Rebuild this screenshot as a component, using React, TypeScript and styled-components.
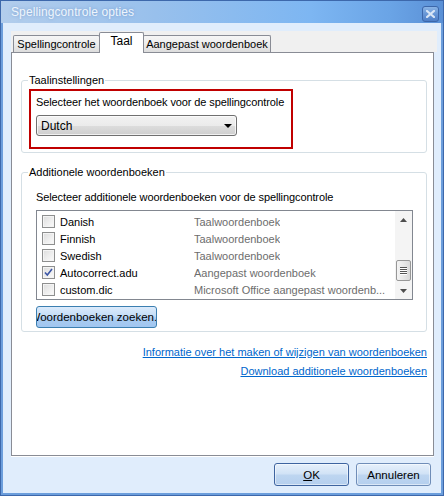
import React from 'react';
import styled, { createGlobalStyle } from 'styled-components';

const GlobalStyle = createGlobalStyle`
  html, body {
    margin: 0;
    padding: 0;
    background: #ffffff;
  }
  body {
    font-family: "Liberation Sans", Arial, sans-serif;
    font-size: 11px;
    color: #000000;
  }
  * {
    box-sizing: border-box;
  }
`;

const Window = styled.div`
  width: 444px;
  height: 496px;
  display: flex;
  flex-direction: column;
  border: 1px solid #3d68ab;
  box-shadow: inset 0 0 0 2px #6c9edc;
  background: #e0edfc;
  overflow: hidden;
`;

const TitleBar = styled.div`
  height: 22px;
  display: flex;
  align-items: center;
  justify-content: space-between;
  padding: 0 4px 0 10px;
  background: linear-gradient(to right, #b2cdec 0%, #98c0ec 35%, #7db6f2 70%, #6aa4e6 88%, #5a90d6 100%);
`;

const Title = styled.span`
  font-size: 12px;
  color: #eef5fc;
  text-shadow: 0 0 3px rgba(90, 130, 190, 0.6);
  letter-spacing: 0.1px;
`;

const CloseButton = styled.div`
  width: 17px;
  height: 16px;
  margin-top: 4px;
  border: 1px solid #3c67aa;
  border-radius: 3px;
  background: linear-gradient(to bottom, #8ab4e6 0%, #6796d6 50%, #4f7fc7 100%);
  display: flex;
  align-items: center;
  justify-content: center;
`;

const Body = styled.div`
  flex: 1;
  display: flex;
  flex-direction: column;
  padding: 8px 6px 0 10px;
`;

const TabControl = styled.div`
  display: flex;
  flex-direction: column;
`;

const TabHeader = styled.div`
  height: 21px;
  display: flex;
  align-items: flex-end;
  padding-left: 2px;
  background: #f0f0f0;
  position: relative;
  z-index: 1;
`;

const Tab = styled.div<{ $active?: boolean; $w: number }>`
  width: ${({ $w }) => $w}px;
  height: ${({ $active }) => ($active ? 21 : 17)}px;
  margin-bottom: ${({ $active }) => ($active ? -1 : 0)}px;
  margin-left: -1px;
  &:first-child {
    margin-left: 0;
  }
  border: 1px solid #898c95;
  border-bottom: none;
  border-radius: 2px 2px 0 0;
  display: flex;
  align-items: center;
  justify-content: center;
  padding-bottom: ${({ $active }) => ($active ? 4 : 0)}px;
  font-size: ${({ $active }) => ($active ? 12 : 11)}px;
  background: ${({ $active }) =>
    $active ? '#ffffff' : 'linear-gradient(to bottom, #f6f6f6 0%, #ececec 50%, #dddddd 100%)'};
  position: relative;
  z-index: ${({ $active }) => ($active ? 2 : 1)};
`;

const Panel = styled.div`
  height: 404px;
  margin-right: 3px;
  border: 1px solid #898c95;
  background: #ffffff;
  box-shadow: 0 1px 0 #ffffff;
  display: flex;
  flex-direction: column;
  padding: 20px 6px 0 9px;
`;

const Group = styled.fieldset<{ $gap?: number }>`
  margin: ${({ $gap }) => $gap ?? 0}px 0 0 0;
  padding: 2px 0 3px 7px;
  border: 1px solid #d5dfe5;
  border-radius: 3px;
  min-width: 0;
`;

const GroupLegend = styled.legend`
  padding: 0 1px;
  margin-left: -1px;
  line-height: 14px;
  font-size: 11px;
`;

const Highlight = styled.div`
  width: 264px;
  height: 60px;
  border: 2px solid #c00000;
  padding: 5px 0 0 5px;
  display: flex;
  flex-direction: column;
  gap: 6px;
`;

const Label = styled.div<{ $top?: number }>`
  line-height: 13px;
  margin-top: ${({ $top }) => $top ?? 0}px;
  letter-spacing: -0.1px;
`;

const Select = styled.div`
  width: 201px;
  height: 21px;
  border: 1px solid #707070;
  border-radius: 3px;
  background: linear-gradient(to bottom, #f2f2f2 0%, #ebebeb 50%, #dddddd 51%, #cfcfcf 100%);
  box-shadow: inset 0 0 0 1px rgba(255, 255, 255, 0.7);
  display: flex;
  align-items: center;
  justify-content: space-between;
  padding: 0 4px 0 4px;
  font-size: 12px;
`;

const GroupInner = styled.div`
  padding-left: 7px;
  display: flex;
  flex-direction: column;
`;

const ListBox = styled.div`
  width: 377px;
  height: 90px;
  margin-top: 6px;
  border: 1px solid #828790;
  display: flex;
  background: #ffffff;
`;

const ListRows = styled.div`
  flex: 1;
  display: flex;
  flex-direction: column;
  padding: 2px 0 0 5px;
  overflow: hidden;
`;

const ListRow = styled.div`
  height: 17px;
  display: flex;
  align-items: center;
  font-size: 11px;
`;

const NameCell = styled.span`
  width: 139px;
  flex-shrink: 0;
  padding-left: 5px;
  white-space: nowrap;
`;

const TypeCell = styled.span`
  color: #6d6d6d;
  white-space: nowrap;
  overflow: hidden;
`;

const Box = styled.div`
  width: 13px;
  height: 13px;
  border: 1px solid #8e8f8f;
  background: linear-gradient(135deg, #dcdcdc 0%, #eeeeee 55%, #fbfbfb 100%);
  box-shadow: inset 0 0 0 1px #f4f4f4;
  display: flex;
  align-items: center;
  justify-content: center;
  flex-shrink: 0;
`;

const ScrollBar = styled.div`
  width: 17px;
  flex-shrink: 0;
  background: #f4f4f4;
  display: flex;
  flex-direction: column;
`;

const ScrollArrow = styled.div`
  height: 17px;
  display: flex;
  align-items: center;
  justify-content: center;
`;

const ScrollTrack = styled.div`
  flex: 1;
  display: flex;
  flex-direction: column;
  justify-content: flex-end;
  align-items: center;
  padding-bottom: 1px;
`;

const Thumb = styled.div`
  width: 15px;
  height: 21px;
  border: 1px solid #979797;
  border-radius: 2px;
  background: linear-gradient(to right, #f4f4f4 0%, #e8e8e8 50%, #d9d9d9 100%);
  display: flex;
  flex-direction: column;
  align-items: center;
  justify-content: center;
  gap: 1px;
`;

const Grip = styled.div`
  width: 7px;
  height: 1px;
  background: #555555;
  box-shadow: 0 1px 0 #ffffff;
`;

const FindButton = styled.div`
  width: 121px;
  height: 22px;
  margin-top: 6px;
  border: 1px solid #3c7fb1;
  border-radius: 3px;
  background: linear-gradient(to bottom, #dcebfb 0%, #c4ddf7 45%, #a9ccf1 55%, #a1c6f0 100%);
  display: flex;
  align-items: center;
  justify-content: center;
  overflow: hidden;
  white-space: nowrap;
  font-size: 11.5px;
`;

const ButtonText = styled.span`
  flex-shrink: 0;
`;

const Links = styled.div`
  margin-top: 14px;
  display: flex;
  flex-direction: column;
  align-items: flex-end;
  gap: 6px;
`;

const Link = styled.a`
  line-height: 13px;
  font-size: 11px;
  color: #0066cc;
  text-decoration: underline;
  cursor: pointer;
`;

const ButtonRow = styled.div`
  display: flex;
  justify-content: flex-end;
  gap: 7px;
  margin-top: 7px;
  padding-right: 6px;
`;

const DialogButton = styled.div<{ $default?: boolean }>`
  width: 75px;
  height: 23px;
  border: 1px solid ${({ $default }) => ($default ? '#3e64a0' : '#6f8db8')};
  border-radius: 3px;
  background: linear-gradient(to bottom, #e6f0fb 0%, #d2e3f6 45%, #bdd5f0 55%, #b5cfee 100%);
  box-shadow: inset 0 0 0 1px rgba(255, 255, 255, 0.5);
  display: flex;
  align-items: center;
  justify-content: center;
  font-size: 11.5px;
`;

const Underlined = styled.span`
  text-decoration: underline;
`;

const dictionaries = [
  { name: 'Danish', type: 'Taalwoordenboek', checked: false },
  { name: 'Finnish', type: 'Taalwoordenboek', checked: false },
  { name: 'Swedish', type: 'Taalwoordenboek', checked: false },
  { name: 'Autocorrect.adu', type: 'Aangepast woordenboek', checked: true },
  { name: 'custom.dic', type: 'Microsoft Office aangepast woordenb...', checked: false },
];

function Checkbox({ checked }: { checked: boolean }) {
  return (
    <Box>
      {checked && (
        <svg width="9" height="9" viewBox="0 0 9 9">
          <path d="M1 4.5 L3.3 7 L8 1" fill="none" stroke="#3c56a6" strokeWidth="1.6" />
        </svg>
      )}
    </Box>
  );
}

function App() {
  return (
    <>
      <GlobalStyle />
      <Window>
        <TitleBar>
          <Title>Spellingcontrole opties</Title>
          <CloseButton>
            <svg width="9" height="8" viewBox="0 0 9 8">
              <path d="M1 1 L8 7 M8 1 L1 7" stroke="#d9e6f6" strokeWidth="2.2" strokeLinecap="square" />
            </svg>
          </CloseButton>
        </TitleBar>
        <Body>
          <TabControl>
            <TabHeader>
              <Tab $w={87}>Spellingcontrole</Tab>
              <Tab $w={45} $active>
                Taal
              </Tab>
              <Tab $w={128}>Aangepast woordenboek</Tab>
            </TabHeader>
            <Panel>
              <Group>
                <GroupLegend>Taalinstellingen</GroupLegend>
                <Highlight>
                  <Label>Selecteer het woordenboek voor de spellingcontrole</Label>
                  <Select>
                    <span>Dutch</span>
                    <svg width="8" height="4" viewBox="0 0 8 4">
                      <path d="M0 0 H8 L4 4 Z" fill="#000000" />
                    </svg>
                  </Select>
                </Highlight>
              </Group>
              <Group $gap={12}>
                <GroupLegend>Additionele woordenboeken</GroupLegend>
                <GroupInner>
                  <Label $top={10}>Selecteer additionele woordenboeken voor de spellingcontrole</Label>
                  <ListBox>
                    <ListRows>
                      {dictionaries.map((d) => (
                        <ListRow key={d.name}>
                          <Checkbox checked={d.checked} />
                          <NameCell>{d.name}</NameCell>
                          <TypeCell>{d.type}</TypeCell>
                        </ListRow>
                      ))}
                    </ListRows>
                    <ScrollBar>
                      <ScrollArrow>
                        <svg width="7" height="4" viewBox="0 0 7 4">
                          <path d="M3.5 0 L7 4 H0 Z" fill="#4d4d4d" />
                        </svg>
                      </ScrollArrow>
                      <ScrollTrack>
                        <Thumb>
                          <Grip />
                          <Grip />
                          <Grip />
                          <Grip />
                        </Thumb>
                      </ScrollTrack>
                      <ScrollArrow>
                        <svg width="7" height="4" viewBox="0 0 7 4">
                          <path d="M0 0 H7 L3.5 4 Z" fill="#4d4d4d" />
                        </svg>
                      </ScrollArrow>
                    </ScrollBar>
                  </ListBox>
                  <FindButton>
                    <ButtonText>Woordenboeken zoeken...</ButtonText>
                  </FindButton>
                </GroupInner>
              </Group>
              <Links>
                <Link>Informatie over het maken of wijzigen van woordenboeken</Link>
                <Link>Download additionele woordenboeken</Link>
              </Links>
            </Panel>
          </TabControl>
          <ButtonRow>
            <DialogButton $default>
              <span>
                <Underlined>O</Underlined>K
              </span>
            </DialogButton>
            <DialogButton>Annuleren</DialogButton>
          </ButtonRow>
        </Body>
      </Window>
    </>
  );
}

export default App;
